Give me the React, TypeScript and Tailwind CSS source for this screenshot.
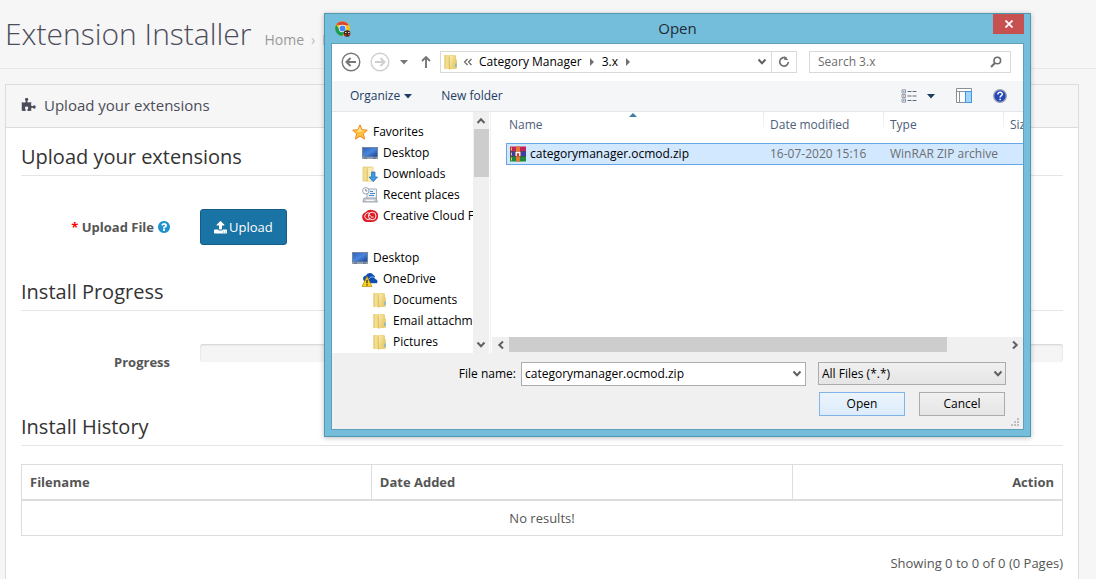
import React, { useState } from 'react';

const FolderIcon = ({ className = 'h-4 w-4' }) => (
  <svg viewBox="0 0 16 16" className={`shrink-0 ${className}`}>
    <defs>
      <linearGradient id="folder-front" x1="0" y1="0" x2="1" y2="1">
        <stop offset="0" stopColor="#fbf0b8" />
        <stop offset="1" stopColor="#e6c660" />
      </linearGradient>
    </defs>
    <path d="M8 1h4l1 1v3l1 1v8l-1 1H8z" fill="#e9cf78" />
    <path d="M1.500 1H8v14H1.500z" fill="#f2dd90" />
    <path d="M1.500 1h1v14h-1z" fill="#e3c668" />
    <path d="M6 2.500 11.500 1v13L7 15.800 6 15z" fill="url(#folder-front)" />
    <path d="M6.300 2.500V15.300" stroke="#d6b24a" strokeWidth=".8" />
    <path d="M12.900 9.500v3.500" stroke="#5fb4ea" strokeWidth="1.200" />
  </svg>
);

const StarIcon = () => (
  <svg viewBox="0 0 16 16" className="h-4 w-4 shrink-0">
    <path
      d="M8 .8l2.100 4.900 5.300.5-4 3.600 1.200 5.300L8 12.300l-4.600 2.800 1.200-5.300-4-3.600 5.300-.5z"
      fill="#fdc03a"
      stroke="#ee8a2b"
      strokeWidth="1"
      strokeLinejoin="round"
    />
    <path d="M8 3l1.200 3.600 3.500.4-7.700 1z" fill="#ffe690" />
  </svg>
);

const MonitorIcon = () => (
  <svg viewBox="0 0 16 16" className="h-4 w-4 shrink-0">
    <defs>
      <linearGradient id="screen" x1="0" y1="0" x2="1" y2="1">
        <stop offset="0" stopColor="#2f62bd" />
        <stop offset=".5" stopColor="#4a86dc" />
        <stop offset="1" stopColor="#1c4292" />
      </linearGradient>
    </defs>
    <path d="M0 2h16v12H0z" fill="#77879c" />
    <path d="M1 3h14v8.500H1z" fill="url(#screen)" />
    <path d="M0 12.200h16V14H0z" fill="#95a2b3" />
    <path d="M2 12.800h3v.7H2zM11 12.800h3v.7h-3z" fill="#4b5664" />
  </svg>
);

const DownloadsIcon = () => (
  <svg viewBox="0 0 16 16" className="h-4 w-4 shrink-0">
    <path d="M1 1h10v14H1z" fill="#f2dd90" stroke="#dcbd60" strokeWidth=".6" />
    <path d="M5 2.500 10.500 1v13L6 15.800 5 15z" fill="#f9ecb4" />
    <path d="M5.300 2.500V15.300" stroke="#d6b24a" strokeWidth=".8" />
    <path d="M9.500 6h3.500v5h2.600l-4.400 4.700L7 11h2.500z" fill="#3b9be6" stroke="#1d6fb8" strokeWidth=".7" />
  </svg>
);

const RecentIcon = () => (
  <svg viewBox="0 0 16 16" className="h-4 w-4 shrink-0">
    <path d="M5 2h9.500v10H5z" fill="#eef2f6" stroke="#8d98a4" strokeWidth=".8" />
    <path d="M8 4.500h3M8 6.500h5M7 8.500h5" stroke="#3f8edb" strokeWidth="1.100" />
    <path d="M2 11h12l1.500 4H.8z" fill="#c7cdd4" stroke="#868f99" strokeWidth=".7" />
    <path d="M4 13.300h8" stroke="#fff" />
    <circle cx="3.800" cy="3.800" r="3.200" fill="#fff" stroke="#8d98a4" strokeWidth=".9" />
    <path d="M3.800 2v2h1.500" stroke="#56616d" strokeWidth=".8" fill="none" />
  </svg>
);

const CreativeCloudIcon = () => (
  <svg viewBox="0 0 16 16" className="h-4 w-4 shrink-0">
    <path d="M10.200 2A6 6 0 0 1 10.200 14H5A5 5 0 0 1 3.500 4.300 7 7 0 0 1 10.200 2z" fill="#dc1f27" />
    <circle cx="10.200" cy="8" r="3.800" fill="none" stroke="#fff" strokeWidth=".9" />
    <path d="M8.400 10.600A3.300 3.300 0 1 1 8 5.500M7 7q1.500.2 2 1.500t2.500.5" fill="none" stroke="#fff" strokeWidth=".9" />
  </svg>
);

const OneDriveIcon = () => (
  <svg viewBox="0 0 16 16" className="h-4 w-4 shrink-0">
    <path d="M1.500 9a3 3 0 0 1 2.500-4.500A4.200 4.200 0 0 1 11.500 4a3 3 0 0 1 1.500 2L7 12H3z" fill="#0d4fb0" />
    <path d="M6.500 12.500a3 3 0 0 1 .8-5A3.500 3.500 0 0 1 13.500 8a2.400 2.400 0 0 1 1 4.500z" fill="#0d4fb0" stroke="#fff" strokeWidth=".6" />
    <path d="M5 5.500 10 15.500H0z" fill="#fdd116" stroke="#b98a00" strokeWidth=".7" strokeLinejoin="round" />
    <path d="M5 8.800v3.400M5 13.200v1.300" stroke="#222" strokeWidth="1.200" />
  </svg>
);

const ArchiveIcon = () => (
  <svg viewBox="0 0 16 16" className="h-4 w-4 shrink-0">
    <path d="M0 .5h16v5H0z" fill="#c2255c" />
    <path d="M0 5.500h16v5H0z" fill="#3b3fa0" />
    <path d="M0 10.500h16v5H0z" fill="#1c8a3c" />
    <path d="M1.500 1.500v3M1.500 6.500v3M1.500 11.500v3" stroke="#f3c941" strokeWidth="1" />
    <path d="M0 5.500h16M0 10.500h16" stroke="#222" strokeWidth=".5" />
    <path d="M6 .5h4v15H6z" fill="#e8772e" />
    <path d="M5.500 5.500h5v5h-5z" fill="#b8431f" />
    <path d="M6.200 10V6.500h3.600V10" stroke="#fff" strokeWidth="1.300" fill="none" />
  </svg>
);

const ChromeIcon = () => (
  <svg viewBox="0 0 16 16" className="h-4 w-4 shrink-0">
    <circle cx="7.500" cy="7.500" r="7.300" fill="#fbc116" />
    <path d="M7.500 4.200 1.200 3.800a7.300 7.300 0 0 1 12.600.4z" fill="#db4437" />
    <path d="M4.700 9 1.200 3.800A7.300 7.300 0 0 0 7.500 14.800l2.800-5z" fill="#1a9c55" />
    <circle cx="7.500" cy="7.500" r="3.700" fill="#fff" />
    <circle cx="7.500" cy="7.500" r="3" fill="#4285f4" />
    <circle cx="12" cy="12.500" r="3.300" fill="#3a251c" />
    <path d="M10 11.500h1.500M13 11.500h1.500" stroke="#f0d9b0" />
    <path d="M9.500 14h2M13 13.500h2" stroke="#e23b2f" strokeWidth="1.300" />
  </svg>
);

const Chevron = ({ d = 'M1.500 2.500 5 6.200l3.500-3.700' }) => (
  <svg viewBox="0 0 10 10" className="h-2.5 w-2.5 shrink-0" fill="none" stroke="#606060" strokeWidth="2">
    <path d={d} />
  </svg>
);

const Caret = ({ className = 'text-[#1e3c64]' }) => (
  <svg viewBox="0 0 8 8" className={`h-2 w-2 shrink-0 ${className}`} fill="currentColor">
    <path d="M0 2h8L4 6.500z" />
  </svg>
);

const CrumbArrow = () => (
  <svg viewBox="0 0 8 8" className="h-2 w-2 shrink-0" fill="#707070">
    <path d="M2 0 6 4 2 8z" />
  </svg>
);

const tree = [
  { label: 'Favorites', icon: StarIcon, indent: 'pl-5' },
  { label: 'Desktop', icon: MonitorIcon, indent: 'pl-[30px]' },
  { label: 'Downloads', icon: DownloadsIcon, indent: 'pl-[30px]' },
  { label: 'Recent places', icon: RecentIcon, indent: 'pl-[30px]' },
  { label: 'Creative Cloud Files', icon: CreativeCloudIcon, indent: 'pl-[30px]' },
  null,
  { label: 'Desktop', icon: MonitorIcon, indent: 'pl-5' },
  { label: 'OneDrive', icon: OneDriveIcon, indent: 'pl-[30px]' },
  { label: 'Documents', icon: FolderIcon, indent: 'pl-10' },
  { label: 'Email attachments', icon: FolderIcon, indent: 'pl-10' },
  { label: 'Pictures', icon: FolderIcon, indent: 'pl-10' },
];

const Legend = ({ children }) => (
  <h2 className="border-b border-[#e5e5e5] pb-[5px] text-[20px] leading-[27px] text-[#333]">{children}</h2>
);

const OpenDialog = () => {
  const [fileName, setFileName] = useState('categorymanager.ocmod.zip');

  return (
    <div
      role="dialog"
      aria-label="Open"
      className="absolute top-[13px] left-[324px] w-[707px] border border-[#5097b1] bg-[#75bedb] px-1.5 pb-1.5 text-[12px] leading-4 text-black shadow-[0_1px_5px_rgba(0,0,0,0.25)]"
    >
      {/* Title bar */}
      <div className="flex h-[29px] items-start justify-between">
        <div className="flex h-[29px] w-[31px] items-center pl-1">
          <ChromeIcon />
        </div>
        <h2 className="pt-1 text-[15px] leading-5 text-[#1d2b33]">Open</h2>
        <button aria-label="Close" className="flex h-5 w-[31px] items-center justify-center bg-[#c75050]">
          <svg viewBox="0 0 8 8" className="h-2 w-2" stroke="#fff" strokeWidth="1.800">
            <path d="M.5.5l7 7M7.500.5l-7 7" />
          </svg>
        </button>
      </div>

      <div className="border border-[#5f9fb8] bg-white">
        {/* Address bar */}
        <div className="flex h-[37px] items-center pr-3 pb-px pl-[9px]">
          <button aria-label="Back">
            <svg viewBox="0 0 20 20" className="h-5 w-5" fill="none" stroke="#777">
              <circle cx="10" cy="10" r="8.800" strokeWidth="1.400" />
              <path d="M15 10H6M9.500 6 5.500 10l4 4" strokeWidth="2" />
            </svg>
          </button>
          <button aria-label="Forward" className="ml-[9px]">
            <svg viewBox="0 0 20 20" className="h-5 w-5" fill="none" stroke="#cfcfcf">
              <circle cx="10" cy="10" r="8.800" strokeWidth="1.400" />
              <path d="M5 10h9M10.500 6l4 4-4 4" strokeWidth="2" />
            </svg>
          </button>
          <button aria-label="Recent locations" className="ml-2.5">
            <Caret className="text-[#777]" />
          </button>
          <button aria-label="Up" className="ml-3">
            <svg viewBox="0 0 12 14" className="h-3.5 w-3" fill="none" stroke="#777" strokeWidth="1.900">
              <path d="M6 13V2M2 6l4-4 4 4" />
            </svg>
          </button>
          <div className="ml-2 flex h-[22px] min-w-0 flex-1 items-center border border-[#d9d9d9] pl-0.5">
            <FolderIcon />
            <svg viewBox="0 0 10 8" className="ml-1 h-2 w-2.5" fill="none" stroke="#666" strokeWidth="1.200">
              <path d="M4.500 1 1.500 4l3 3M8.500 1l-3 3 3 3" />
            </svg>
            <span className="ml-1.5">Category Manager</span>
            <span className="ml-1.5"><CrumbArrow /></span>
            <span className="ml-1.5">3.x</span>
            <span className="ml-1.5"><CrumbArrow /></span>
            <button aria-label="Previous locations" className="ml-auto pr-1">
              <Chevron />
            </button>
            <button aria-label="Refresh" className="flex h-5 w-[25px] items-center justify-center border-l border-[#d9d9d9]">
              <svg viewBox="0 0 12 12" className="h-3 w-3" fill="none" stroke="#707070" strokeWidth="1.700">
                <path d="M8.500 2.300A4.300 4.300 0 1 0 10.300 6" />
                <path d="M6.300 0v4h4z" fill="#707070" stroke="none" />
              </svg>
            </button>
          </div>
          <div className="ml-3 flex h-[22px] w-[202px] items-center border border-[#d9d9d9] pr-2">
            <input aria-label="Search 3.x" placeholder="Search 3.x" className="min-w-0 flex-1 pl-2 outline-none placeholder:text-[#6d6d6d]" />
            <svg viewBox="0 0 12 12" className="h-3 w-3" fill="none" stroke="#6d6d6d">
              <circle cx="7.300" cy="4.500" r="3.300" strokeWidth="1.600" />
              <path d="M5 7 1 11" strokeWidth="2" />
            </svg>
          </div>
        </div>

        {/* Toolbar */}
        <div className="flex h-[31px] items-center border-b border-[#e3e6ea] bg-[#f4f6f8] pr-4 pl-[18px] text-[#1e3c64]">
          <button className="flex items-center gap-1">
            Organize <Caret />
          </button>
          <button className="ml-[29px]">New folder</button>
          <button aria-label="Change your view" className="ml-auto flex items-center gap-2.5">
            <svg viewBox="0 0 16 14" className="h-3.5 w-4" fill="none">
              <path d="M1 .8h3.500v3.200H1zM1 5.400h3.500v3.200H1zM1 10h3.500v3.200H1z" fill="#fff" stroke="#929aa5" />
              <path d="M2.200 2.400h1.200M2.200 11.600h1.200" stroke="#3973b5" />
              <path d="M2.200 7h1.200" stroke="#c44" />
              <path d="M6.500 2.500h4m1 0h4M6.500 7h4m1 0h4M6.500 11.500h4m1 0h4" stroke="#5a6b7f" />
            </svg>
            <Caret />
          </button>
          <button aria-label="Show the preview pane" className="ml-[21px]">
            <svg viewBox="0 0 17 16" className="h-4 w-[17px]" fill="none">
              <path d="M.5.500h15v14H.5z" fill="#fff" stroke="#8a8f96" />
              <path d="M0 3.500h16M3.500 4v11" stroke="#8a8f96" />
              <path d="M9.500 3.500h6v11h-6z" fill="#a4d4fb" stroke="#3b97e8" />
            </svg>
          </button>
          <button aria-label="Help" className="ml-5">
            <svg viewBox="0 0 14 14" className="h-3.5 w-3.5" fill="none">
              <circle cx="7" cy="7" r="6.300" fill="#2647b8" stroke="#9ba3b4" strokeWidth="1.300" />
              <path d="M4.800 5.400c0-3 4.600-2.700 4.500-.2C9.200 6.800 7.100 6.700 7.100 8.600M7.100 9.700v1.500" stroke="#fff" strokeWidth="1.500" />
            </svg>
          </button>
        </div>

        <div className="flex h-[241px]">
          {/* Folder tree */}
          <ul className="w-[141px] overflow-hidden pt-[9px]">
            {tree.map((item, i) =>
              item ? (
                <li key={i} className={`flex h-[21px] items-center gap-[5px] whitespace-nowrap ${item.indent}`}>
                  <item.icon />
                  {item.label}
                </li>
              ) : (
                <li key={i} className="h-[21px]"></li>
              )
            )}
          </ul>
          <div className="flex w-4 flex-col items-center bg-[#f0f0f0]">
            <div className="flex h-[17px] items-center"><Chevron d="M1.500 7 5 3.300 8.500 7" /></div>
            <div className="h-12 w-[15px] bg-[#cdcdcd]"></div>
            <div className="mt-auto flex h-4 items-center"><Chevron /></div>
          </div>
          <div className="ml-px w-0.5 border-l border-[#f0f0f0]"></div>

          {/* File list */}
          <div className="flex min-w-0 flex-1 flex-col">
            <div className="flex-1 overflow-hidden pl-[14px]">
              <table className="w-[580px] table-fixed border-separate border-spacing-0 text-left">
                <colgroup>
                  <col className="w-[257px]" />
                  <col className="w-[120px]" />
                  <col className="w-[120px]" />
                  <col />
                </colgroup>
                <thead className="text-[#4c607a]">
                  <tr className="h-[31px]">
                    <th className="relative pb-1.5 pl-[3px] font-normal">
                      Name
                      <svg viewBox="0 0 8 4" className="absolute top-px left-[123px] h-1 w-2">
                        <path d="M0 4 4 0l4 4z" fill="#3c7f9f" />
                      </svg>
                    </th>
                    {['Date modified', 'Type', 'Size'].map((name) => (
                      <th key={name} className="bg-linear-to-b from-[#dfe6ef] to-white bg-[length:1px_20px] bg-no-repeat pb-1.5 pl-[7px] font-normal">
                        {name}
                      </th>
                    ))}
                  </tr>
                </thead>
                <tbody>
                  <tr className="h-[22px] bg-[#d1e8ff] text-[#6d6d6d]">
                    <td className="border-y border-l border-[#66a7e8] pl-[3px] text-black">
                      <div className="flex items-center gap-1">
                        <ArchiveIcon />
                        categorymanager.ocmod.zip
                      </div>
                    </td>
                    <td className="border-y border-[#66a7e8] pl-[7px]">16-07-2020 15:16</td>
                    <td className="border-y border-[#66a7e8] pl-[7px]">WinRAR ZIP archive</td>
                    <td className="border-y border-[#66a7e8]"></td>
                  </tr>
                </tbody>
              </table>
            </div>
            <div className="flex h-4 items-start bg-[#f0f0f0]">
              <div className="flex h-[15px] w-[17px] items-center justify-center"><Chevron d="M7 1.500 3.300 5 7 8.500" /></div>
              <div className="h-[15px] w-[438px] bg-[#cdcdcd]"></div>
              <div className="ml-auto flex h-[15px] w-[17px] items-center justify-center"><Chevron d="M3 1.500 6.700 5 3 8.500" /></div>
            </div>
          </div>
        </div>

        {/* Footer */}
        <div className="relative bg-[#f0f0f0] pt-[9px] pr-[17px] pb-[13px]">
          <div className="flex items-start justify-end">
            <label htmlFor="file-name" className="leading-6">File name:</label>
            <div className="ml-[5px] flex h-6 w-[285px] items-center border border-[#abadb3] bg-white pr-[3px]">
              <input
                id="file-name"
                value={fileName}
                onChange={(e) => setFileName(e.target.value)}
                className="min-w-0 flex-1 pl-[3px] outline-none"
              />
              <Chevron />
            </div>
            <div className="relative ml-3 w-[188px]">
              <select aria-label="File type" className="h-[23px] w-full appearance-none border border-[#acacac] bg-linear-to-b from-[#f0f0f0] to-[#e5e5e5] pl-[3px] outline-none">
                <option>All Files (*.*)</option>
              </select>
              <div className="pointer-events-none absolute top-[7px] right-[3px]"><Chevron /></div>
            </div>
          </div>
          <div className="mt-1.5 flex justify-end gap-[14px] pr-px">
            <button className="h-6 w-[86px] border border-[#7eb4ea] bg-linear-to-b from-[#ecf4fc] to-[#dcecfc]">Open</button>
            <button className="h-6 w-[86px] border border-[#acacac] bg-linear-to-b from-[#f0f0f0] to-[#e5e5e5]">Cancel</button>
          </div>
          <svg viewBox="0 0 9 9" className="absolute right-[3px] bottom-0.5 h-[9px] w-[9px]" fill="#bfbfbf">
            <path d="M6 0h2v2H6zM3 3h2v2H3zM6 3h2v2H6zM0 6h2v2H0zM3 6h2v2H3zM6 6h2v2H6z" />
          </svg>
        </div>
      </div>
    </div>
  );
};

const App = () => {
  return (
    <div className="relative flex min-h-screen flex-col bg-[#f6f6f6] font-['Open_Sans',sans-serif] text-[13px] leading-5 text-[#555]">
      {/* Page header */}
      <header className="flex h-[69px] items-baseline border-b border-[#e8e8e8] pt-[13px] pl-[5px]">
        <h1 className="text-[30px] leading-[41px] font-light text-[#4c4d5a]">Extension Installer</h1>
        <nav aria-label="Breadcrumb" className="ml-[13px] flex gap-[7px] text-[14px] text-[#999]">
          <a href="#home">Home</a>
          <span className="text-[#bbb]">›</span>
          <a href="#installer" className="text-[#1e91cf]">Extension Installer</a>
        </nav>
      </header>

      <main className="mt-[15px] mr-[17px] ml-[5px] flex-1 border border-b-0 border-[#dcdcdc] bg-white">
        <div className="flex h-[43px] items-center gap-2 border-b border-[#dcdcdc] bg-[#f6f6f6] pb-0.5 pl-[15px] text-[15px] text-[#4c4d5a]">
          <svg viewBox="0 0 1792 1792" className="h-[15px] w-[15px]" fill="currentColor">
            <path d="M1755 1083q0 81-44.500 135t-123.500 54q-41 0-77.500-17.500t-59-38-56.500-38-71-17.500q-110 0-110 124 0 39 16 115t15 115v5q-22 0-33 1-34 3-97.500 11.500t-115.500 13.500-98 5q-61 0-103-26.500t-42-83.500q0-37 17.500-71t38-56.500 38-59 17.500-77.500q0-79-54-123.500t-135-44.500q-84 0-143 45.500t-59 127.500q0 43 15 83t33.500 64.500 33.500 53 15 50.500q0 45-46 89-37 35-117 35-95 0-245-24-9-2-27.500-4t-27.500-4l-13-2q-1 0-3-1-2 0-2-1v-1024q2 1 17.500 3.500t34 5 21.500 3.500q150 24 245 24 80 0 117-35 46-44 46-89 0-22-15-50.500t-33.500-53-33.500-64.500-15-83q0-82 59-127.500t144-45.500q80 0 134 44.500t54 123.500q0 41-17.500 77.500t-38 59-38 56.500-17.500 71q0 57 42 83.500t103 26.500q64 0 180-15t163-17v2q-1 2-3.500 17.500t-5 34-3.500 21.500q-24 150-24 245 0 80 35 117 44 46 89 46 22 0 50.500-15t53-33.500 64.500-33.500 83-15q82 0 127.500 59t45.500 143z" />
          </svg>
          Upload your extensions
        </div>

        <div className="px-[15px] pt-[15px]">
          <Legend>Upload your extensions</Legend>
          <div className="flex items-center pt-[33px]">
            <label htmlFor="button-upload" className="flex w-[149px] items-center justify-end gap-1 font-bold">
              <span><span className="text-[#f00]">*</span> Upload File</span>
              <svg viewBox="0 0 1536 1536" className="h-3 w-3 text-[#1e91cf]" fill="currentColor">
                <path transform="translate(-128 -128)" d="M1024 1376v-192q0-14-9-23t-23-9h-192q-14 0-23 9t-9 23v192q0 14 9 23t23 9h192q14 0 23-9t9-23zm256-672q0-88-55.500-163t-138.500-116-170-41q-243 0-371 213-15 24 8 42l132 100q7 6 19 6 16 0 25-12 53-68 86-92 34-24 86-24 48 0 85.500 26t37.500 59q0 38-20 61t-68 45q-63 28-115.500 86.500t-52.500 125.500v36q0 14 9 23t23 9h192q14 0 23-9t9-23q0-19 21.500-49.500t54.500-49.500q32-18 49-28.500t46-35 44.500-48 28-60.500 12.500-81zm384 192q0 209-103 385.500t-279.500 279.500-385.500 103-385.500-103-279.500-279.500-103-385.500 103-385.500 279.500-279.500 385.500-103 385.500 103 279.500 279.500 103 385.500z" />
              </svg>
            </label>
            <button id="button-upload" className="ml-[30px] flex h-9 items-center gap-0.5 rounded-[3px] border border-[#165c86] bg-[#1a73a5] px-[13px] text-white">
              <svg viewBox="0 0 1664 1664" className="h-[13px] w-[13px]" fill="currentColor">
                <path transform="translate(0 -64)" d="M1280 1472q0-26-19-45t-45-19-45 19-19 45 19 45 45 19 45-19 19-45zm256 0q0-26-19-45t-45-19-45 19-19 45 19 45 45 19 45-19 19-45zm128-224v320q0 40-28 68t-68 28h-1472q-40 0-68-28t-28-68v-320q0-40 28-68t68-28h427q21 56 70.500 92t110.500 36h256q61 0 110.500-36t70.500-92h427q40 0 68 28t28 68zm-325-648q-17 40-59 40h-256v448q0 26-19 45t-45 19h-256q-26 0-45-19t-19-45v-448h-256q-42 0-59-40-17-39 14-69l448-448q18-19 45-19t45 19l448 448q31 30 14 69z" />
              </svg>
              Upload
            </button>
          </div>

          <div className="pt-[33px]">
            <Legend>Install Progress</Legend>
          </div>
          <div className="flex pt-[33px]">
            <div className="w-[149px] pt-2 text-right font-bold">Progress</div>
            <div
              role="progressbar"
              aria-label="Progress"
              className="ml-[30px] h-[18px] flex-1 rounded-[3px] bg-[#f5f5f5] shadow-[inset_0_1px_2px_rgba(0,0,0,0.15)]"
            ></div>
          </div>

          <div className="pt-[41px]">
            <Legend>Install History</Legend>
          </div>
          <table className="mt-[18px] w-full table-fixed border-collapse border border-[#ddd]">
            <thead>
              <tr className="h-[35px] border-b-2 border-[#ddd] text-left">
                <th className="w-[33.600%] border-r border-[#ddd] px-2">Filename</th>
                <th className="w-[40.500%] border-r border-[#ddd] px-2">Date Added</th>
                <th className="px-2 text-right">Action</th>
              </tr>
            </thead>
            <tbody>
              <tr className="h-9">
                <td colSpan={3} className="text-center">No results!</td>
              </tr>
            </tbody>
          </table>
          <p className="pt-[17px] text-right">Showing 0 to 0 of 0 (0 Pages)</p>
        </div>
      </main>

      <OpenDialog />
    </div>
  );
};

export default App;
